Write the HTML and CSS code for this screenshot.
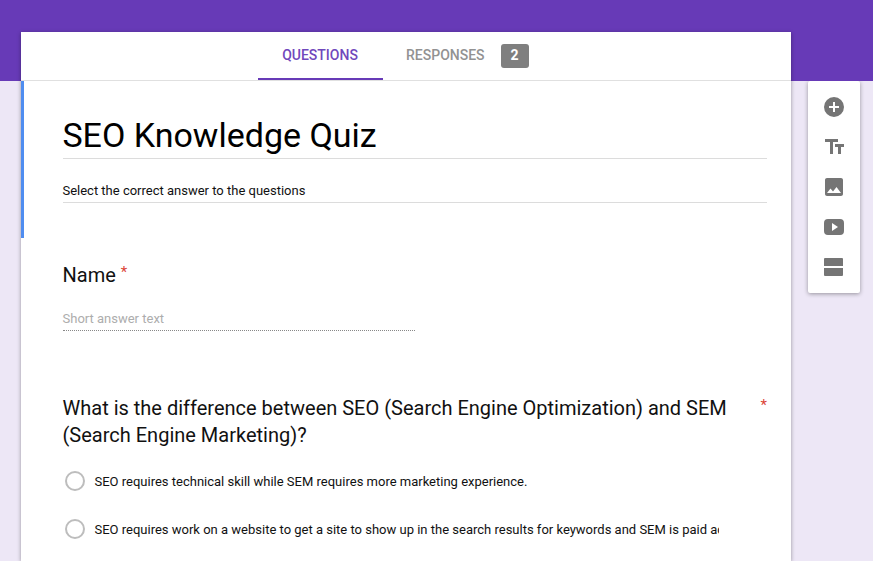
FILE: index.html
```html
<!DOCTYPE html>
<html lang="en">
<head>
<meta charset="utf-8">
<title>SEO Knowledge Quiz</title>
<link rel="stylesheet" href="styles.css">
</head>
<body>
<main class="layout">
  <div class="card">
    <nav class="tabs">
      <div class="tab tab-active"><span class="tab-label">QUESTIONS</span></div>
      <div class="tab tab-responses"><span class="tab-label">RESPONSES</span><span class="badge">2</span></div>
    </nav>
    <header class="intro">
      <h1 class="title">SEO Knowledge Quiz</h1>
      <p class="description">Select the correct answer to the questions</p>
    </header>
    <section class="question name-question">
      <h2 class="heading"><span class="heading-text">Name</span><span class="required">*</span></h2>
      <p class="short-answer">Short answer text</p>
    </section>
    <section class="question choice-question">
      <div class="choice-head">
        <h2 class="heading-text">What is the difference between SEO (Search Engine Optimization) and SEM<br>(Search Engine Marketing)?</h2>
        <span class="required">*</span>
      </div>
      <div class="option"><span class="radio"></span><span class="option-text">SEO requires technical skill while SEM requires more marketing experience.</span></div>
      <div class="option"><span class="radio"></span><span class="option-text">SEO requires work on a website to get a site to show up in the search results for keywords and SEM is paid ad</span></div>
    </section>
  </div>
  <aside class="toolbar">
    <svg class="tool" viewBox="0 0 24 24"><path d="M12 2a10 10 0 1 0 0 20 10 10 0 0 0 0-20zm5 11h-4v4h-2v-4H7v-2h4V7h2v4h4z"/></svg>
    <svg class="tool" viewBox="0 0 24 24"><path d="M3 4h13v3h-5v12H8V7H3zM13 9h9v3h-3v7h-3v-7h-3z"/></svg>
    <svg class="tool" viewBox="0 0 24 24"><path d="M21 19V5c0-1.100-.9-2-2-2H5c-1.100 0-2 .9-2 2v14c0 1.100.9 2 2 2h14c1.100 0 2-.9 2-2zM8.500 13.500l2.500 3.010L14.500 12l4.500 6H5z"/></svg>
    <svg class="tool" viewBox="0 0 24 24"><path d="M6 4h12q4 0 4 4v8q0 4-4 4H6q-4 0-4-4V8q0-4 4-4zm4 4v8l6-4z"/></svg>
    <svg class="tool" viewBox="0 0 24 24"><path d="M3 3h17q1 0 1 1v7H2V4q0-1 1-1zM2 13h19v7q0 1-1 1H3q-1 0-1-1z"/></svg>
  </aside>
</main>
</body>
</html>
```

FILE: styles.css
```css
* { box-sizing: border-box; }
body {
  margin: 0;
  height: 561px;
  overflow: hidden;
  background: linear-gradient(#673ab7 81px, #ede7f6 81px);
  font-family: Roboto, "Liberation Sans", sans-serif;
  font-size: 13px;
  color: #111;
}
h1, h2, p { margin: 0; font-weight: 400; }
.layout { display: flex; align-items: flex-start; padding: 32px 0 0 21px; }
.card {
  width: 770px;
  height: 529px;
  background: #fff;
  box-shadow: 0 1px 4px rgba(0, 0, 0, .37);
}
.tabs {
  display: flex;
  height: 49px;
  padding-left: 237px;
  border-bottom: 1px solid #e0e0e0;
}
.tab { display: flex; align-items: center; height: 48px; font-size: 14px; font-weight: 500; }
.tab-label { white-space: nowrap; }
.tab-active { justify-content: center; width: 125px; padding-right: 1px; border-bottom: 2px solid #673ab7; color: #7048bc; }
.tab-responses { padding-left: 23px; color: #929292; }
.tab-responses .tab-label { padding-bottom: 2px; }
.badge {
  width: 28px;
  height: 24px;
  margin-left: 16px;
  border-radius: 3px;
  background: #7f7f7f;
  color: #fff;
  font-size: 14px;
  font-weight: 700;
  line-height: 23px;
  text-align: center;
}
.intro { height: 157px; padding: 31px 24px 0 39px; border-left: 3px solid #4f8df0; }
.title {
  height: 47px;
  border-bottom: 1px solid #dcdcdc;
  color: #000;
  font-size: 34px;
  line-height: 46px;
  text-indent: -.6px;
}
.description { height: 24px; margin-top: 20px; border-bottom: 1px solid #dcdcdc; line-height: 23px; text-indent: -.6px; }
.question { padding: 0 24px 0 41.5px; }
.name-question { padding-top: 24px; }
.heading { display: flex; }
.heading-text { font-size: 20px; line-height: 27px; }
.required { color: #db4437; font-size: 15px; line-height: 21px; }
.heading .required { margin-left: 5px; }
.short-answer {
  width: 352px;
  height: 22px;
  margin-top: 20px;
  border-bottom: 1px dotted #888;
  color: #adadad;
  line-height: 20px;
}
.choice-question { padding-top: 64px; }
.choice-head { display: flex; justify-content: space-between; height: 62px; white-space: nowrap; }
.option { display: flex; align-items: center; width: 656.5px; height: 48px; padding-left: 2.5px; overflow: hidden; }
.radio { flex: none; width: 20px; height: 20px; margin-right: 9.5px; border: 2px solid #bdbdbd; border-radius: 50%; }
.option-text { white-space: nowrap; }
.toolbar {
  display: flex;
  flex-direction: column;
  align-items: center;
  gap: 16px;
  width: 52px;
  height: 212px;
  margin: 49px 0 0 17px;
  padding-top: 14px;
  border-radius: 2px;
  background: #fff;
  box-shadow: 0 1px 4px rgba(0, 0, 0, .37);
  clip-path: inset(0 -6px -8px);
}
.tool { width: 24px; height: 24px; fill: #757575; fill-rule: evenodd; }
```
